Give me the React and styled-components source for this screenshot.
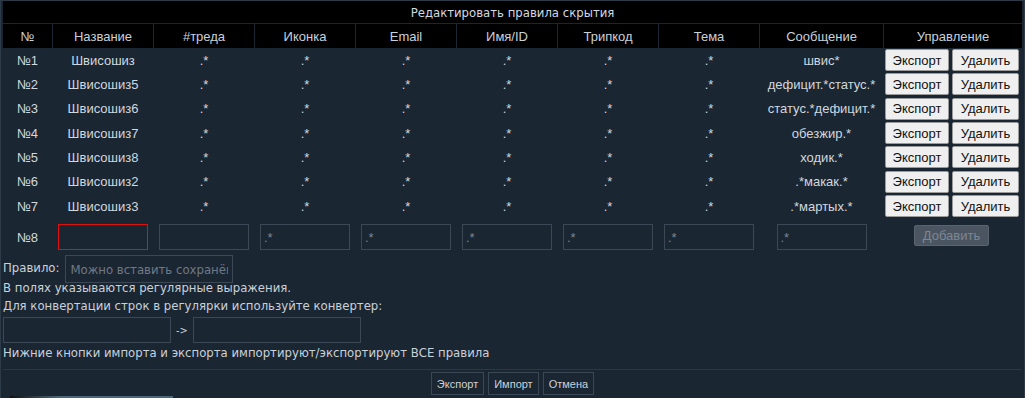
// Import dependencies
import React from 'react';
import styled, { createGlobalStyle } from 'styled-components';

const GlobalStyle = createGlobalStyle`
	html, body {
		margin: 0;
		padding: 0;
		background: #1b2633;
		overflow: hidden;
	}
`

const Panel = styled.div`
	width: 1025px;
	height: 398px;
	box-sizing: border-box;
	background: #1b2633;
	border: 1px solid #2d3a48;
	border-bottom: none;
	padding: 0 2px 0 2px;
	position: relative;
	color: #c9d1d9;
	font-family: "DejaVu Sans Condensed", "DejaVu Sans", sans-serif;
	font-size: 13px;
`

const TitleBar = styled.div`
	height: 22px;
	background: #000;
	display: flex;
	align-items: center;
	justify-content: center;
	color: #d2d9e0;
	margin-bottom: 1px;
`

const Table = styled.table`
	width: 1021px;
	table-layout: fixed;
	border-collapse: separate;
	border-spacing: 1px 0;
	margin-left: -1px;
	font-family: "Liberation Sans", Arial, sans-serif;
	font-size: 13px;
	th {
		background: #000;
		height: 24px;
		font-weight: normal;
		color: #c9d1d9;
		padding: 0;
		text-align: center;
	}
	td {
		height: 24.33px;
		padding: 0;
		text-align: center;
		color: #d0d8df;
		white-space: nowrap;
	}
`

const Controls = styled.td`
	&& {
		text-align: left;
		padding-left: 1px;
	}
`

const LightButton = styled.button`
	height: 22px;
	box-sizing: border-box;
	background: #efefef;
	border: 1px solid #9a9a9a;
	border-radius: 2px;
	font-family: "Liberation Sans", Arial, sans-serif;
	font-size: 13px;
	color: #111;
	padding: 0 6px;
	margin-right: 3px;
	vertical-align: middle;
	width: ${pr => pr.$w}px;
`

const NewRow = styled.tr`
	td {
		height: 36px;
		padding-top: 1px;
	}
`

const Field = styled.input`
	width: 90px;
	height: 26px;
	box-sizing: border-box;
	background: transparent;
	border: 1px solid ${pr => pr.$error ? '#e01010' : '#3c4856'};
	outline: none;
	color: #c9d1d9;
	padding: 0 3px;
	font-family: "Liberation Sans", Arial, sans-serif;
	font-size: 13px;
	&::placeholder {
		color: #7b8590;
	}
`

const AddButton = styled.button`
	width: 75px;
	height: 21px;
	box-sizing: border-box;
	background: #4b5561;
	border: 1px solid #5a6470;
	border-radius: 2px;
	color: #7d8792;
	font-family: "Liberation Sans", Arial, sans-serif;
	font-size: 13px;
	padding: 0;
	margin-left: 29px;
	margin-top: -7px;
`

const RuleRow = styled.div`
	display: flex;
	align-items: center;
	gap: 6px;
	height: 24px;
`

const WideField = styled.input`
	width: ${pr => pr.$w}px;
	height: ${pr => pr.$h}px;
	box-sizing: border-box;
	background: transparent;
	border: 1px solid #3c4856;
	outline: none;
	color: #c9d1d9;
	padding: 0 4px;
	font-family: "DejaVu Sans Condensed", "DejaVu Sans", sans-serif;
	font-size: 13px;
	margin-bottom: ${pr => pr.$overhang || 0}px;
	&::placeholder {
		color: #6f7985;
	}
`

const Line = styled.div`
	height: 18px;
	line-height: 18px;
	white-space: nowrap;
`

const ConverterRow = styled.div`
	display: flex;
	align-items: center;
	gap: 5px;
	margin: 2px 0 1px;
	span {
		font-size: 11px;
	}
`

const Footer = styled.div`
	border-top: 1px solid #2b3846;
	margin-top: 7px;
	padding-top: 2px;
	display: flex;
	justify-content: center;
	gap: 4px;
`

const DarkButton = styled.button`
	height: 23px;
	box-sizing: border-box;
	background: #1b2633;
	border: 1px solid #3a4755;
	color: #c9d1d9;
	font-family: "Liberation Sans", Arial, sans-serif;
	font-size: 11px;
	padding: 0 5px;
`

const ScrollThumb = styled.div`
	position: absolute;
	left: 9px;
	bottom: 0;
	width: 163px;
	height: 2px;
	background: linear-gradient(to right, #111, #4d6776 30%, #4d6776);
`

const rules = [
	['Швисошиз', 'швис*'],
	['Швисошиз5', 'дефицит.*статус.*'],
	['Швисошиз6', 'статус.*дефицит.*'],
	['Швисошиз7', 'обезжир.*'],
	['Швисошиз8', 'ходик.*'],
	['Швисошиз2', '.*макак.*'],
	['Швисошиз3', '.*мартых.*'],
]

const columns = [
	['№', 49], ['Название', 100], ['#треда', 100], ['Иконка', 100], ['Email', 100],
	['Имя/ID', 100], ['Трипкод', 100], ['Тема', 100], ['Сообщение', 123], ['Управление', 138],
]

function App() {
	return (
		<Panel>
			<GlobalStyle />
			<TitleBar>Редактировать правила скрытия</TitleBar>
			<Table>
				<colgroup>
					{columns.map(([name, w]) => <col key={name} style={{ width: w }} />)}
				</colgroup>
				<thead>
					<tr>
						{columns.map(([name]) => <th key={name}>{name}</th>)}
					</tr>
				</thead>
				<tbody>
					{rules.map(([name, msg], i) => (
						<tr key={name}>
							<td>№{i + 1}</td>
							<td>{name}</td>
							<td>.*</td>
							<td>.*</td>
							<td>.*</td>
							<td>.*</td>
							<td>.*</td>
							<td>.*</td>
							<td>{msg}</td>
							<Controls>
								<LightButton $w={64}>Экспорт</LightButton>
								<LightButton $w={67}>Удалить</LightButton>
							</Controls>
						</tr>
					))}
					<NewRow>
						<td>№8</td>
						<td><Field $error /></td>
						<td><Field /></td>
						<td><Field placeholder='.*' /></td>
						<td><Field placeholder='.*' /></td>
						<td><Field placeholder='.*' /></td>
						<td><Field placeholder='.*' /></td>
						<td><Field placeholder='.*' /></td>
						<td><Field placeholder='.*' /></td>
						<Controls><AddButton disabled>Добавить</AddButton></Controls>
					</NewRow>
				</tbody>
			</Table>
			<RuleRow>
				Правило:
				<WideField $w={168} $h={28} $overhang={-4} placeholder='Можно вставить сохранённое правило' />
			</RuleRow>
			<Line>В полях указываются регулярные выражения.</Line>
			<Line>Для конвертации строк в регулярки используйте конвертер:</Line>
			<ConverterRow>
				<WideField $w={168} $h={26} />
				<span>-&gt;</span>
				<WideField $w={168} $h={26} />
			</ConverterRow>
			<Line>Нижние кнопки импорта и экспорта импортируют/экспортируют ВСЕ правила</Line>
			<Footer>
				<DarkButton>Экспорт</DarkButton>
				<DarkButton>Импорт</DarkButton>
				<DarkButton>Отмена</DarkButton>
			</Footer>
			<ScrollThumb />
		</Panel>
	);
};

export default App;
